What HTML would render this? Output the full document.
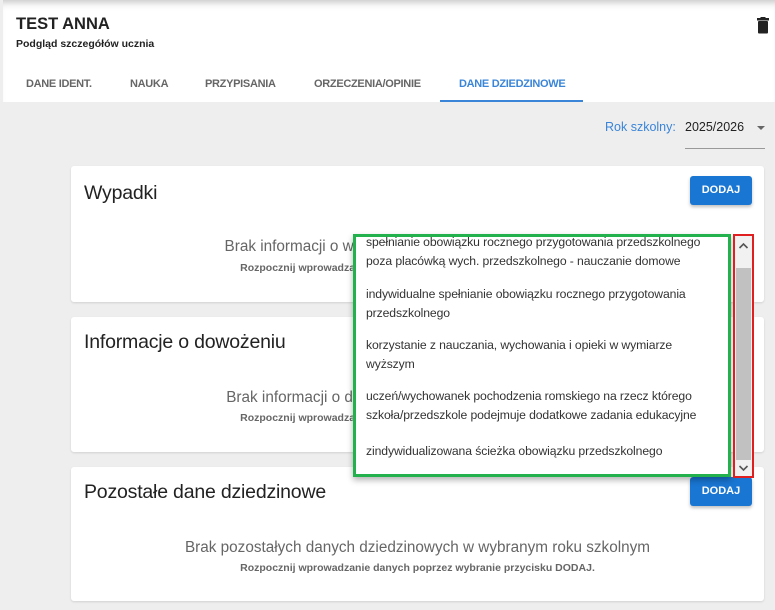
<!DOCTYPE html>
<html><head><meta charset="utf-8"><style>
*{box-sizing:border-box;margin:0;padding:0}
body{width:775px;height:610px;overflow:hidden;background:#eeeeee;font-family:"Liberation Sans",Arial,sans-serif;position:relative}
.abs{position:absolute;white-space:nowrap}
.hdr{left:3px;top:0;width:772px;height:102px;background:#fff;box-shadow:inset 0 8px 8px -6px rgba(0,0,0,.25)}
.tab{top:78px;font-size:11px;font-weight:bold;color:#666;letter-spacing:-0.3px}
.card{left:71px;width:693px;background:#fff;border-radius:3px;box-shadow:0 1px 2px rgba(0,0,0,.12)}
.card h2{position:absolute;left:13px;font-size:19.5px;font-weight:normal;color:#222;letter-spacing:-0.2px;white-space:nowrap}
.btn{position:absolute;left:619px;width:62px;height:29px;background:#1976d2;color:#fff;font-size:11px;font-weight:bold;border-radius:3px;text-align:center;line-height:29px;box-shadow:0 2px 3px rgba(0,0,0,.25)}
.m{position:absolute;left:0;width:693px;text-align:center;color:#666;font-size:15.3px;white-space:nowrap}
.s{position:absolute;left:0;width:693px;text-align:center;color:#666;font-size:10.5px;font-weight:bold;white-space:nowrap}
.dd{left:353px;top:234px;width:378px;height:243px;background:#fff;border:3px solid #22b14c;box-shadow:0 3px 6px rgba(0,0,0,.3);overflow:hidden}
.dd p{position:absolute;left:10px;font-size:12.2px;color:#333;line-height:19px;white-space:nowrap;letter-spacing:-0.1px}
.sb{left:733px;top:234px;width:21px;height:244px;border:2px solid #e02020;background:#f1f1f1}
</style></head><body>
<div class="abs hdr"></div>
<div class="abs" style="left:16px;top:15px;font-size:16.5px;font-weight:bold;color:#222">TEST ANNA</div>
<div class="abs" style="left:16px;top:38px;font-size:10.5px;font-weight:bold;color:#222">Podgląd szczegółów ucznia</div>
<svg class="abs" style="left:756px;top:17px" width="14" height="17" viewBox="0 0 14 17"><rect x="1" y="1" width="12" height="2.5" fill="#222"/><rect x="4.5" y="0" width="5" height="2" fill="#222"/><rect x="2" y="4" width="10" height="12.5" rx="1" fill="#222"/></svg>
<div class="abs tab" style="left:26px">DANE IDENT.</div>
<div class="abs tab" style="left:130px">NAUKA</div>
<div class="abs tab" style="left:205px">PRZYPISANIA</div>
<div class="abs tab" style="left:314px">ORZECZENIA/OPINIE</div>
<div class="abs tab" style="left:459px;color:#3a85d8">DANE DZIEDZINOWE</div>
<div class="abs" style="left:440px;top:100px;width:143px;height:2px;background:#3a85d8"></div>
<div class="abs" style="left:605px;top:120px;font-size:12.5px;color:#3a85d8">Rok szkolny:</div>
<div class="abs" style="left:685px;top:120px;font-size:12.5px;color:#222">2025/2026</div>
<div class="abs" style="left:757px;top:126px;width:0;height:0;border-left:4px solid transparent;border-right:4px solid transparent;border-top:4px solid #666"></div>
<div class="abs" style="left:685px;top:148px;width:80px;height:1px;background:#999"></div>

<div class="abs card" style="top:166px;height:136px">
<h2 style="top:16px">Wypadki</h2><div class="btn" style="top:10px">DODAJ</div>
<div class="m" style="top:72px">Brak informacji o wypadkach w wybranym roku szkolnym</div>
<div class="s" style="top:96px">Rozpocznij wprowadzanie danych poprzez wybranie przycisku DODAJ.</div>
</div>
<div class="abs card" style="top:317px;height:135px">
<h2 style="top:14px">Informacje o dowożeniu</h2>
<div class="m" style="top:72px">Brak informacji o dowożeniu w wybranym roku szkolnym</div>
<div class="s" style="top:95px">Rozpocznij wprowadzanie danych poprzez wybranie przycisku DODAJ.</div>
</div>
<div class="abs card" style="top:467px;height:134px">
<h2 style="top:14px">Pozostałe dane dziedzinowe</h2><div class="btn" style="top:10px">DODAJ</div>
<div class="m" style="top:72px">Brak pozostałych danych dziedzinowych w wybranym roku szkolnym</div>
<div class="s" style="top:95px">Rozpocznij wprowadzanie danych poprzez wybranie przycisku DODAJ.</div>
</div>

<div class="abs dd">
<p style="top:-4px">spełnianie obowiązku rocznego przygotowania przedszkolnego<br>poza placówką wych. przedszkolnego - nauczanie domowe</p>
<p style="top:48px">indywidualne spełnianie obowiązku rocznego przygotowania<br>przedszkolnego</p>
<p style="top:99px">korzystanie z nauczania, wychowania i opieki w wymiarze<br>wyższym</p>
<p style="top:150px">uczeń/wychowanek pochodzenia romskiego na rzecz którego<br>szkoła/przedszkole podejmuje dodatkowe zadania edukacyjne</p>
<p style="top:205px">zindywidualizowana ścieżka obowiązku przedszkolnego</p>
</div>
<div class="abs sb">
<div class="abs" style="left:1px;top:32px;width:15px;height:192px;background:#c1c1c1"></div>
<svg class="abs" style="left:3px;top:6px" width="11" height="8" viewBox="0 0 11 8"><path d="M1.5 6 L5.5 2 L9.5 6" fill="none" stroke="#555" stroke-width="1.6"/></svg>
<svg class="abs" style="left:3px;top:228px" width="11" height="8" viewBox="0 0 11 8"><path d="M1.5 2 L5.5 6 L9.5 2" fill="none" stroke="#555" stroke-width="1.6"/></svg>
</div>
</body></html>
